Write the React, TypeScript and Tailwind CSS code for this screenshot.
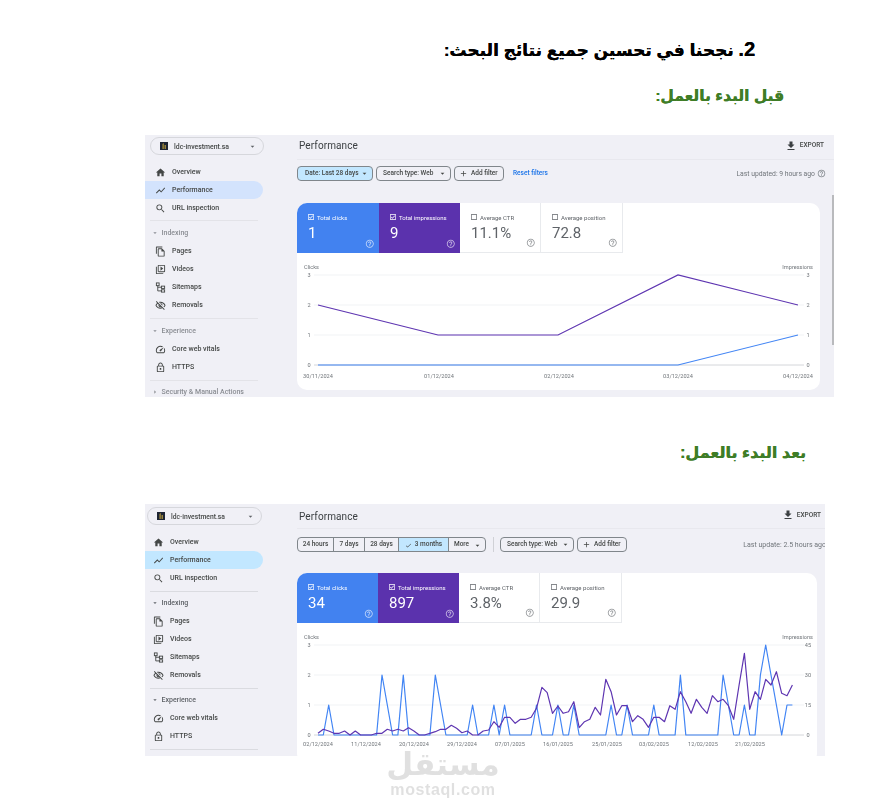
import React from "react";
import {
  MdHome, MdShowChart, MdSearch, MdOutlineFileCopy, MdOutlineVideoLibrary,
  MdOutlineVisibilityOff, MdOutlineSpeed, MdOutlineLock, MdFileDownload, MdHelpOutline, MdCheck,
  MdAdd, MdArrowDropDown, MdOutlineCheckBox, MdCheckBoxOutlineBlank,
} from "react-icons/md";

const roboto = "font-['Roboto','Liberation_Sans',sans-serif]";

type IconT = React.ComponentType<{ className?: string }>;

function SitemapIcon({ className }: { className?: string }) {
  return (
    <svg viewBox="0 0 12 12" className={className} fill="none" stroke="currentColor" strokeWidth="1">
      <rect x="1.5" y="1" width="3" height="3" />
      <rect x="7" y="4.5" width="3.5" height="2.5" />
      <rect x="7" y="8.5" width="3.5" height="2.5" />
      <path d="M3 4v5.7h4M3 5.7h4" />
    </svg>
  );
}

function NavRow({ icon: Icon, label, active, activeBg, pl }: { icon: IconT; label: string; active?: boolean; activeBg?: string; pl: string }) {
  return (
    <div className={`h-[18px] flex items-center gap-[6px] rounded-r-full font-medium text-[7px] text-[#444746] ${pl} ${active ? activeBg : ""}`}>
      <Icon className="w-[11px] h-[11px] shrink-0 text-[#444746]" />
      <span className="pt-[1px]">{label}</span>
    </div>
  );
}

function Section({ label, color, collapsed }: { label: string; color: string; collapsed?: boolean }) {
  return (
    <div className={`h-[18px] flex items-center gap-[3px] pl-[5.5px] text-[7px] font-medium ${color}`}>
      <MdArrowDropDown className={`w-[8px] h-[8px] shrink-0 ${collapsed ? "-rotate-90" : ""}`} />
      <span className="whitespace-nowrap pt-[1px]">{label}</span>
    </div>
  );
}

function Logo() {
  return (
    <svg viewBox="0 0 8 8" className="w-[8px] h-[8px] shrink-0">
      <rect width="8" height="8" fill="#1d2433" />
      <path d="M2.5 7V2l1.2-1v6zM4.6 7V3h1.2v4z" fill="#b59a3c" />
    </svg>
  );
}

function Tile({ label, value, variant, w }: { label: string; value: string; variant: "blue" | "purple" | "plain"; w: string }) {
  const bg = variant === "blue" ? "bg-[#4282f0] text-white" : variant === "purple" ? "bg-[#5b32ad] text-white" : "bg-white text-[#5f6368] border-r border-b border-[#e8eaed]";
  const Box = variant === "plain" ? MdCheckBoxOutlineBlank : MdOutlineCheckBox;
  return (
    <div className={`relative h-[50px] pl-[10px] pt-[9px] ${w} ${bg}`}>
      <div className="flex items-center gap-[2px] h-[10px] text-[6px]">
        <Box className="w-[8px] h-[8px] shrink-0" />
        <span className="whitespace-nowrap">{label}</span>
      </div>
      <div className="text-[15px] leading-[18px] mt-[2px] ml-[1px]">{value}</div>
      <MdHelpOutline className="absolute right-[5px] bottom-[5px] w-[9.5px] h-[9.5px] opacity-70" />
    </div>
  );
}

function Chip({ children, className }: { children: React.ReactNode; className?: string }) {
  return (
    <div className={`h-[15px] flex items-center rounded-[4px] border border-[#80868b] text-[6.5px] font-medium text-[#444746] whitespace-nowrap ${className ?? ""}`}>
      {children}
    </div>
  );
}

const Dates = ({ items, y }: { items: [string, number][]; y: number }) => (
  <>
    {items.map(([t, x]) => (
      <text key={t} x={x} y={y} fontSize="5.6" fill="#70757a" textAnchor="middle" fontFamily="Roboto">{t}</text>
    ))}
  </>
);

function Grid({ top, labelsR, labelsL }: { top: number; labelsR: string[]; labelsL: string[] }) {
  return (
    <>
      {[0, 1, 2, 3].map((i) => (
        <g key={i}>
          <line x1="314" x2="804" y1={top + i * 30} y2={top + i * 30} stroke={i === 3 ? "#c9ccd1" : "#eef0f2"} strokeWidth="0.8" />
          <text x="309" y={top + i * 30 + 2} fontSize="5.6" fill="#70757a" textAnchor="middle" fontFamily="Roboto">{labelsL[i]}</text>
          <text x="808" y={top + i * 30 + 2} fontSize="5.6" fill="#70757a" textAnchor="middle" fontFamily="Roboto">{labelsR[i]}</text>
        </g>
      ))}
      <text x="304" y={top - 6} fontSize="5.6" fill="#70757a" fontFamily="Roboto">Clicks</text>
      <text x="813" y={top - 6} fontSize="5.6" fill="#70757a" textAnchor="end" fontFamily="Roboto">Impressions</text>
    </>
  );
}

function ChartBefore() {
  return (
    <svg viewBox="297 253 523 137" className="w-[523px] h-[137px] block">
      <Grid top={275} labelsL={["3", "2", "1", "0"]} labelsR={["3", "2", "1", "0"]} />
      <polyline points="318,365 678,365 798,335" fill="none" stroke="#4285f4" strokeWidth="1.2" />
      <polyline points="318,305 438,335 558,335 678,275 798,305" fill="none" stroke="#5e35b1" strokeWidth="1.2" />
      <Dates y={378} items={[["30/11/2024", 318], ["01/12/2024", 439], ["02/12/2024", 559], ["03/12/2024", 678], ["04/12/2024", 798]]} />
    </svg>
  );
}

const clicks: Record<number, number> = { 2: 1, 12: 2, 13: 1, 16: 2, 22: 2, 23: 1, 29: 1, 33: 1, 35: 1, 41: 1, 45: 1, 48: 1, 55: 1, 58: 1, 63: 1, 68: 2, 76: 2, 77: 1, 80: 1, 83: 2, 84: 3, 85: 2, 86: 1, 88: 1, 89: 1 };
const purpleZoom = [700, 688, 693, 700, 700, 693, 705, 693, 705, 705, 705, 700, 700, 688, 693, 688, 693, 683, 693, 705, 705, 700, 695, 688, 688, 676, 685, 698, 693, 705, 705, 693, 690, 665, 682, 652, 652, 670, 658, 658, 652, 625, 562, 578, 640, 618, 640, 635, 605, 683, 665, 658, 622, 645, 538, 575, 645, 617, 617, 665, 647, 658, 682, 652, 652, 665, 617, 628, 575, 605, 640, 598, 622, 640, 587, 605, 598, 617, 658, 555, 460, 628, 575, 598, 538, 555, 515, 580, 587, 555];
const px = (i: number) => (318 + i * 5.33).toFixed(1);
const bluePts = purpleZoom.map((_, i) => `${px(i)},${735 - (clicks[i] ?? 0) * 30}`).join(" ");
const purplePts = purpleZoom.map((z, i) => `${px(i)},${(500 + z / 3).toFixed(1)}`).join(" ");

function ChartAfter() {
  return (
    <svg viewBox="297 623 520 133" className="w-[520px] h-[133px] block">
      <Grid top={645} labelsL={["3", "2", "1", "0"]} labelsR={["45", "30", "15", "0"]} />
      <polyline points={bluePts} fill="none" stroke="#4285f4" strokeWidth="1.2" strokeLinejoin="round" />
      <polyline points={purplePts} fill="none" stroke="#5e35b1" strokeWidth="1.2" strokeLinejoin="round" />
      <Dates y={746} items={[["02/12/2024", 318], ["11/12/2024", 366], ["20/12/2024", 414], ["29/12/2024", 462], ["07/01/2025", 510], ["16/01/2025", 558], ["25/01/2025", 607], ["03/02/2025", 654], ["12/02/2025", 703], ["21/02/2025", 750]]} />
    </svg>
  );
}

function Panel1() {
  const r = { pl: "pl-[10px]" };
  return (
    <div className={`flex w-[689px] h-[262px] ml-[145px] mt-[27px] bg-[#f0f0f6] overflow-hidden relative blur-[0.45px] ${roboto}`}>
      <aside className="w-[118px] shrink-0 pt-[2px]">
        <div className="ml-[5px] w-[114px] h-[18px] border border-[#d6d7dc] rounded-full flex items-center pl-[9px] pr-[6px] gap-[6px] text-[6.9px] font-medium text-[#444746]">
          <Logo /><span className="pt-[2px]">ldc-investment.sa</span>
          <MdArrowDropDown className="ml-auto w-[9px] h-[9px] text-[#5f6368]" />
        </div>
        <div className="mt-[8px]">
          <NavRow icon={MdHome} label="Overview" {...r} />
          <NavRow icon={MdShowChart} label="Performance" active activeBg="bg-[#d3e3fd]" {...r} />
          <NavRow icon={MdSearch} label="URL inspection" {...r} />
          <div className="ml-[5px] mr-[5px] mt-[3px] mb-[3px] h-px bg-[#e3e3e8]" />
          <Section label="Indexing" color="text-[#8a8d93]" />
          <NavRow icon={MdOutlineFileCopy} label="Pages" {...r} />
          <NavRow icon={MdOutlineVideoLibrary} label="Videos" {...r} />
          <NavRow icon={SitemapIcon} label="Sitemaps" {...r} />
          <NavRow icon={MdOutlineVisibilityOff} label="Removals" {...r} />
          <div className="ml-[5px] mr-[5px] mt-[4px] mb-[3px] h-px bg-[#e3e3e8]" />
          <Section label="Experience" color="text-[#8a8d93]" />
          <NavRow icon={MdOutlineSpeed} label="Core web vitals" {...r} />
          <NavRow icon={MdOutlineLock} label="HTTPS" {...r} />
          <div className="ml-[5px] mr-[5px] mt-[4px] mb-[2px] h-px bg-[#e3e3e8]" />
          <Section label="Security & Manual Actions" color="text-[#8a8d93]" collapsed />
        </div>
      </aside>
      <main className="flex-1 min-w-0 pl-[34px]">
        <div className="h-[25px] border-b border-[#e8e8ee] flex items-center pb-[3px] pl-[2px] pr-[10px]">
          <span className="text-[10px] text-[#3c4043] tracking-[0.1px]">Performance</span>
          <MdFileDownload className="ml-auto w-[12px] h-[12px] text-[#3c4043]" />
          <span className="ml-[3px] text-[6.5px] font-medium text-[#444746]">EXPORT</span>
        </div>
        <div className="mt-[6px] h-[15px] flex items-center pr-[8px]">
          <Chip className="w-[76px] pl-[7px] bg-[#c2e7ff] border-[#8fb2c8]"><span className="pt-[1px]">Date: Last 28 days</span><MdArrowDropDown className="ml-auto mr-[3px] w-[9px] h-[9px]" /></Chip>
          <Chip className="w-[75px] ml-[3px] pl-[6px]"><span className="pt-[1px]">Search type: Web</span><MdArrowDropDown className="ml-auto mr-[3px] w-[9px] h-[9px]" /></Chip>
          <Chip className="w-[50px] ml-[3px] pl-[4px] gap-[3px]"><MdAdd className="w-[9px] h-[9px]" /><span className="pt-[1px]">Add filter</span></Chip>
          <span className="ml-[9px] pt-[1px] text-[6.5px] font-medium text-[#1a73e8] whitespace-nowrap">Reset filters</span>
          <span className="ml-auto pt-[1px] text-[6.8px] text-[#70757a] whitespace-nowrap">Last updated: 9 hours ago</span>
          <MdHelpOutline className="ml-[2px] w-[9px] h-[9px] text-[#80868b]" />
        </div>
        <div className="mt-[22px] w-[523px] h-[187px] bg-white rounded-[10px] overflow-hidden">
          <div className="flex">
            <Tile label="Total clicks" value="1" variant="blue" w="w-[82px]" />
            <Tile label="Total impressions" value="9" variant="purple" w="w-[81px]" />
            <Tile label="Average CTR" value="11.1%" variant="plain" w="w-[81px]" />
            <Tile label="Average position" value="72.8" variant="plain" w="w-[82px]" />
          </div>
          <ChartBefore />
        </div>
      </main>
      <div className="absolute right-0 top-[60px] w-[2px] h-[150px] bg-[#b9babd]" />
    </div>
  );
}

function Panel2() {
  const r = { pl: "pl-[8px]" };
  const seg = "h-full flex items-center justify-center border-r border-[#80868b] pt-[1px]";
  return (
    <div className={`flex w-[680px] h-[252px] ml-[145px] mt-[39px] bg-[#f0f0f6] overflow-hidden blur-[0.45px] ${roboto}`}>
      <aside className="w-[118px] shrink-0 pt-[3px]">
        <div className="ml-[2px] w-[115px] h-[18px] border border-[#d6d7dc] rounded-full flex items-center pl-[9px] pr-[6px] gap-[6px] text-[6.75px] font-medium text-[#444746]">
          <Logo /><span className="pt-[2px]">ldc-investment.sa</span>
          <MdArrowDropDown className="ml-auto w-[9px] h-[9px] text-[#5f6368]" />
        </div>
        <div className="mt-[8px]">
          <NavRow icon={MdHome} label="Overview" {...r} />
          <NavRow icon={MdShowChart} label="Performance" active activeBg="bg-[#c2e7ff]" {...r} />
          <NavRow icon={MdSearch} label="URL inspection" {...r} />
          <div className="ml-[5px] mr-[5px] mt-[4px] mb-[2px] h-px bg-[#dadbe0]" />
          <Section label="Indexing" color="text-[#5f6368]" />
          <NavRow icon={MdOutlineFileCopy} label="Pages" {...r} />
          <NavRow icon={MdOutlineVideoLibrary} label="Videos" {...r} />
          <NavRow icon={SitemapIcon} label="Sitemaps" {...r} />
          <NavRow icon={MdOutlineVisibilityOff} label="Removals" {...r} />
          <div className="ml-[5px] mr-[5px] mt-[4px] mb-[2px] h-px bg-[#dadbe0]" />
          <Section label="Experience" color="text-[#5f6368]" />
          <NavRow icon={MdOutlineSpeed} label="Core web vitals" {...r} />
          <NavRow icon={MdOutlineLock} label="HTTPS" {...r} />
          <div className="ml-[5px] mr-[5px] mt-[4px] h-px bg-[#dadbe0]" />
        </div>
      </aside>
      <main className="flex-1 min-w-0 pl-[34px]">
        <div className="h-[25px] border-b border-[#e8e8ee] flex items-center pl-[2px] pr-[4px]">
          <span className="text-[10px] text-[#3c4043] tracking-[0.1px]">Performance</span>
          <MdFileDownload className="ml-auto mb-[2px] w-[12px] h-[12px] text-[#3c4043]" />
          <span className="ml-[3px] text-[6.5px] font-medium text-[#444746]">EXPORT</span>
        </div>
        <div className="mt-[8px] h-[15px] flex items-center -mr-[1px]">
          <Chip className="w-[189px] overflow-hidden text-[#444746]">
            <div className={`${seg} w-[36px]`}>24 hours</div>
            <div className={`${seg} w-[31px]`}>7 days</div>
            <div className={`${seg} w-[34px]`}>28 days</div>
            <div className={`${seg} w-[50px] bg-[#c2e7ff] gap-[3px]`}><MdCheck className="w-[7px] h-[7px]" />3 months</div>
            <div className="flex-1 h-full flex items-center pl-[5px] pt-[1px]">More<MdArrowDropDown className="ml-auto mr-[3px] w-[9px] h-[9px]" /></div>
          </Chip>
          <div className="ml-[7px] w-px h-[15px] bg-[#d0d1d6]" />
          <Chip className="w-[74px] ml-[6px] pl-[6px]"><span className="pt-[1px]">Search type: Web</span><MdArrowDropDown className="ml-auto mr-[3px] w-[9px] h-[9px]" /></Chip>
          <Chip className="w-[50px] ml-[3px] pl-[4px] gap-[3px]"><MdAdd className="w-[9px] h-[9px]" /><span className="pt-[1px]">Add filter</span></Chip>
          <span className="ml-auto pt-[1px] text-[7px] text-[#70757a] whitespace-nowrap">Last update: 2.5 hours ago</span>
        </div>
        <div className="mt-[21px] w-[520px] h-[190px] bg-white rounded-[10px] overflow-hidden">
          <div className="flex">
            <Tile label="Total clicks" value="34" variant="blue" w="w-[81px]" />
            <Tile label="Total impressions" value="897" variant="purple" w="w-[81px]" />
            <Tile label="Average CTR" value="3.8%" variant="plain" w="w-[81px]" />
            <Tile label="Average position" value="29.9" variant="plain" w="w-[82px]" />
          </div>
          <ChartAfter />
        </div>
      </main>
    </div>
  );
}

export default function App() {
  const ar = "font-['Liberation_Sans','DejaVu_Sans',sans-serif] font-bold [text-shadow:0.3px_0_0_currentColor]";
  return (
    <div className="relative w-[886px] h-[812px] bg-white overflow-hidden">
      <div dir="rtl" className={`pt-[37px] pr-[131px] h-[62px] text-[17px] leading-[24px] text-black whitespace-nowrap ${ar}`}>
        <span className="text-[20px]">2.</span> نجحنا في تحسين جميع نتائج البحث:
      </div>
      <div dir="rtl" className={`mt-[22px] pr-[102px] h-[24px] text-[15.5px] leading-[24px] text-[#3f7d27] whitespace-nowrap ${ar}`}>
        قبل البدء بالعمل:
      </div>
      <Panel1 />
      <div dir="rtl" className={`mt-[44px] pr-[80px] h-[24px] text-[16px] leading-[24px] text-[#3f7d27] whitespace-nowrap ${ar}`}>
        بعد البدء بالعمل:
      </div>
      <Panel2 />
      <div className="absolute left-[373px] top-[748px] w-[140px] flex flex-col items-center text-[#d9d9d9] opacity-80">
        <div dir="rtl" className="font-['DejaVu_Sans',sans-serif] font-bold text-[31px] leading-[32px]">مستقل</div>
        <div className="mt-[2px] font-['Liberation_Sans',sans-serif] font-bold text-[16px] leading-[16px] tracking-[0.6px]">mostaql.com</div>
      </div>
    </div>
  );
}
